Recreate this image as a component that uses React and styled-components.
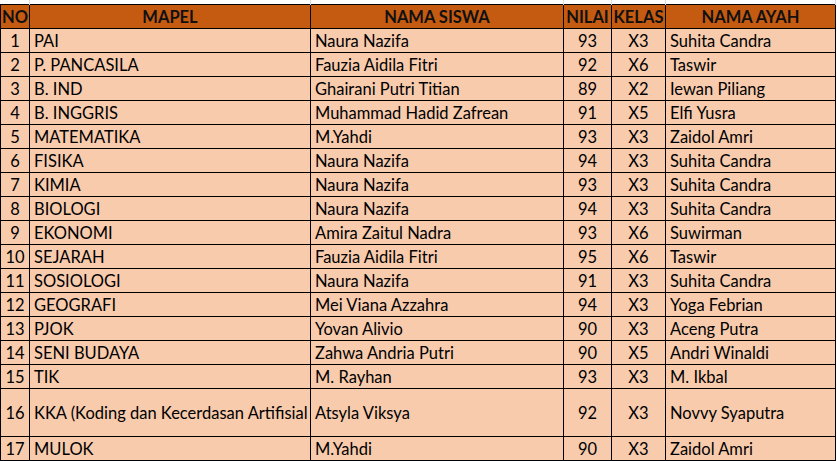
import React from "react";
import styled, { createGlobalStyle } from "styled-components";

const Global = createGlobalStyle`
  html, body { margin: 0; padding: 0; background: #ffffff; }
  body { font-family: Lato, "Open Sans", "Liberation Sans", sans-serif; }
`;

const Sheet = styled.table`
  border-collapse: collapse;
  table-layout: fixed;
  width: 835px;
  font-family: Lato, "Liberation Sans", sans-serif;
  font-size: 16.5px;
  color: #000;
`;

const GridCell = styled.td`
  height: 4px;
  padding: 0;
  font-size: 0;
  line-height: 0;
  border-right: 1px solid #d9d9d9;
  border-left: none;
  border-top: none;
  background: #fff;
  box-sizing: border-box;
`;

const Head = styled.th`
  background: #c55a11;
  border: 1px solid #000;
  height: 24px;
  box-sizing: border-box;
  padding: 1px 0 0;
  font-weight: 700;
  font-size: 16.5px;
  line-height: 18px;
  color: #111;
  text-align: center;
  white-space: nowrap;
  overflow: hidden;
`;

const Cell = styled.td`
  background: #f8cbad;
  border: 1px solid #000;
  height: ${(p) => (p.$tall ? 48 : 24)}px;
  box-sizing: border-box;
  padding: 2px 0 0 ${(p) => (p.$align === "left" ? 4 : 0)}px;
  text-align: ${(p) => p.$align || "left"};
  white-space: nowrap;
  overflow: hidden;
  vertical-align: middle;
  line-height: 18px;
`;

const cols = [29, 281, 253, 48, 54, 170];

const rows = [
  ["1", "PAI", "Naura Nazifa", "93", "X3", "Suhita Candra"],
  ["2", "P. PANCASILA", "Fauzia Aidila Fitri", "92", "X6", "Taswir"],
  ["3", "B. IND", "Ghairani Putri Titian", "89", "X2", "Iewan Piliang"],
  ["4", "B. INGGRIS", "Muhammad Hadid Zafrean", "91", "X5", "Elfi Yusra"],
  ["5", "MATEMATIKA", "M.Yahdi", "93", "X3", "Zaidol Amri"],
  ["6", "FISIKA", "Naura Nazifa", "94", "X3", "Suhita Candra"],
  ["7", "KIMIA", "Naura Nazifa", "93", "X3", "Suhita Candra"],
  ["8", "BIOLOGI", "Naura Nazifa", "94", "X3", "Suhita Candra"],
  ["9", "EKONOMI", "Amira Zaitul Nadra", "93", "X6", "Suwirman"],
  ["10", "SEJARAH", "Fauzia Aidila Fitri", "95", "X6", "Taswir"],
  ["11", "SOSIOLOGI", "Naura Nazifa", "91", "X3", "Suhita Candra"],
  ["12", "GEOGRAFI", "Mei Viana Azzahra", "94", "X3", "Yoga Febrian"],
  ["13", "PJOK", "Yovan Alivio", "90", "X3", "Aceng Putra"],
  ["14", "SENI BUDAYA", "Zahwa Andria Putri", "90", "X5", "Andri Winaldi"],
  ["15", "TIK", "M. Rayhan", "93", "X3", "M. Ikbal"],
  ["16", "KKA (Koding dan Kecerdasan Artifisial", "Atsyla Viksya", "92", "X3", "Novvy Syaputra"],
  ["17", "MULOK", "M.Yahdi", "90", "X3", "Zaidol Amri"],
];

const aligns = ["center", "left", "left", "center", "center", "left"];
const heads = ["NO", "MAPEL", "NAMA SISWA", "NILAI", "KELAS", "NAMA AYAH"];

export default function App() {
  return (
    <>
      <Global />
      <Sheet>
        <colgroup>
          {cols.map((w, i) => (
            <col key={i} style={{ width: w }} />
          ))}
        </colgroup>
        <tbody>
          <tr>
            {cols.map((_, i) => (
              <GridCell key={i} />
            ))}
          </tr>
          <tr>
            {heads.map((h) => (
              <Head key={h}>{h}</Head>
            ))}
          </tr>
          {rows.map((r) => (
            <tr key={r[0]}>
              {r.map((v, i) => (
                <Cell key={i} $align={aligns[i]} $tall={r[0] === "16"}>
                  {v}
                </Cell>
              ))}
            </tr>
          ))}
        </tbody>
      </Sheet>
    </>
  );
}
